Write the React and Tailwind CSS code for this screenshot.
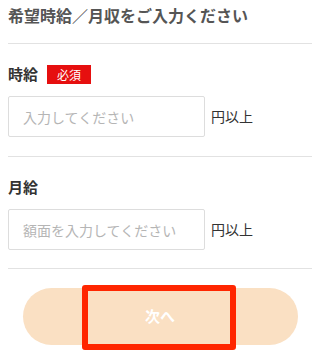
import React from "react";

const font = { fontFamily: '"Noto Sans CJK JP", "Noto Sans", sans-serif' };

const App = () => {
  return (
    <div className="w-[320px] h-[358px] bg-white overflow-hidden px-2 relative" style={font}>
      <h2 className="pt-[3px] h-[43px] text-[16px] leading-[24px] font-bold text-[#555555]">
        希望時給／月収をご入力ください
      </h2>
      <div className="border-t border-[#e2e2e2]" />

      {/* 時給 */}
      <div className="pt-[20px] pb-[19px] border-b border-[#e2e2e2]">
        <div className="flex items-center gap-[9px] h-[20px]">
          <span className="text-[15px] font-bold text-[#333333]">時給</span>
          <span className="bg-[#e60f0f] text-white text-[12px] leading-[19px] w-[44px] text-center">必須</span>
        </div>
        <div className="flex items-center mt-[12px]">
          <input
            className="w-[197px] h-[41px] border border-[#dddddd] rounded-[2px] px-[14px] text-[14px] placeholder:text-[#b5b5b5] outline-none"
            placeholder="入力してください"
          />
          <span className="ml-[6px] text-[14px] text-[#333333]">円以上</span>
        </div>
      </div>

      {/* 月給 */}
      <div className="pt-[20px] pb-[18px] border-b border-[#e2e2e2]">
        <div className="flex items-center h-[20px]">
          <span className="text-[15px] font-bold text-[#333333]">月給</span>
        </div>
        <div className="flex items-center mt-[12px]">
          <input
            className="w-[197px] h-[41px] border border-[#dddddd] rounded-[2px] px-[14px] text-[14px] placeholder:text-[#b5b5b5] outline-none"
            placeholder="額面を入力してください"
          />
          <span className="ml-[6px] text-[14px] text-[#333333]">円以上</span>
        </div>
      </div>

      <div className="flex justify-center pt-[19px]">
        <button className="w-[275px] h-[57px] rounded-full bg-[#fae0c3] text-white text-[15px] font-bold">
          次へ
        </button>
      </div>

      {/* annotation box */}
      <div className="absolute left-[82px] top-[285px] w-[154px] h-[65px] border-[6px] border-[#ff2600] rounded-[3px]" />
    </div>
  );
};

export default App;
